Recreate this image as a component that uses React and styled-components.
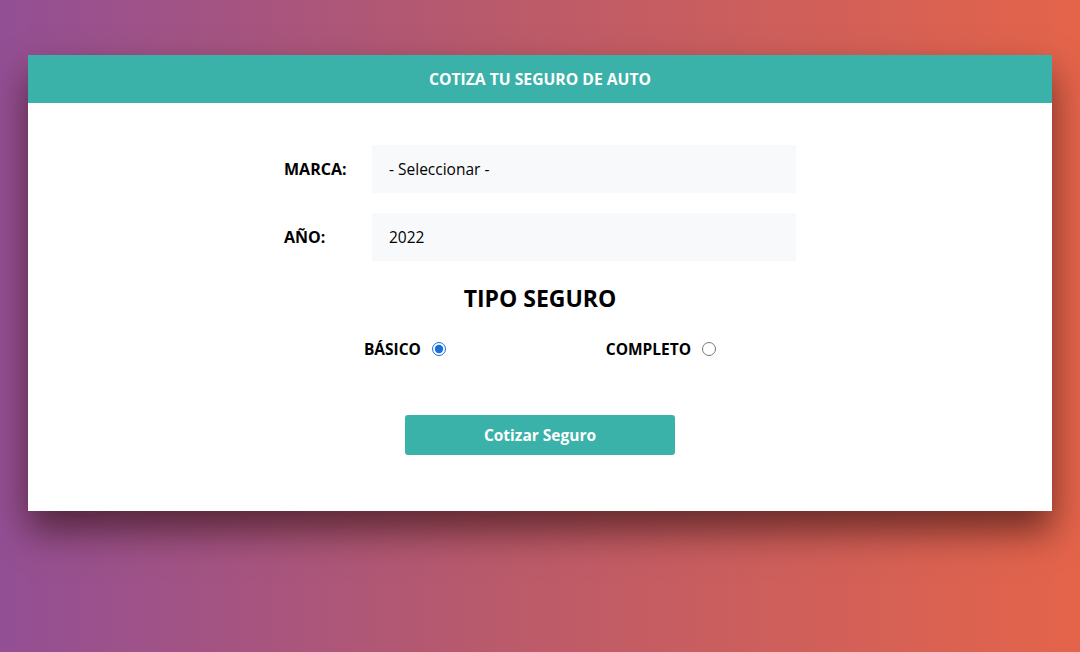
import styled, { createGlobalStyle } from "styled-components";

const GlobalStyle = createGlobalStyle`
  * { box-sizing: border-box; }
  html, body {
    margin: 0;
    height: 100%;
  }
  body {
    font-family: "Open Sans", "Noto Sans", sans-serif;
    background: linear-gradient(to right, #934f94 0%, #b95a6c 45%, #e4644a 100%);
    min-height: 652px;
  }
`;

export default function App() {
  return (
    <>
      <GlobalStyle />
      <Page>
        <Card>
          <Header>Cotiza tu seguro de auto</Header>
          <Form>
            <Field>
              <Label>Marca:</Label>
              <Select defaultValue="">
                <option value="">- Seleccionar -</option>
              </Select>
            </Field>
            <Field>
              <Label>Año:</Label>
              <Select defaultValue="2022">
                <option value="2022">2022</option>
              </Select>
            </Field>
            <Title>Tipo Seguro</Title>
            <Radios>
              <RadioGroup>
                <RadioLabel>Básico</RadioLabel>
                <Radio type="radio" name="plan" defaultChecked />
              </RadioGroup>
              <RadioGroup>
                <RadioLabel>Completo</RadioLabel>
                <Radio type="radio" name="plan" />
              </RadioGroup>
            </Radios>
            <Button type="button">Cotizar Seguro</Button>
          </Form>
        </Card>
      </Page>
    </>
  );
}

const Page = styled.div`
  padding: 55px 28px 0;
`;

const Card = styled.div`
  background: #fff;
  box-shadow: 0 20px 34px rgba(40, 10, 10, 0.6);
`;

const Header = styled.header`
  height: 48px;
  background: #3ab1a9;
  color: #fff;
  display: flex;
  align-items: center;
  justify-content: center;
  font-size: 15.7px;
  font-weight: 700;
  text-transform: uppercase;
`;

const Form = styled.form`
  width: 512px;
  margin: 0 auto;
  padding: 42px 0 56px;
  display: flex;
  flex-direction: column;
`;

const Field = styled.div`
  display: flex;
  align-items: center;
  margin-bottom: 20px;
`;

const Label = styled.label`
  flex: 0 0 88px;
  font-size: 16px;
  font-weight: 700;
  text-transform: uppercase;
  color: #000;
`;

const Select = styled.select`
  flex: 1;
  height: 48px;
  border: none;
  background: #f8f9fa;
  padding: 0 17px;
  font-family: inherit;
  font-size: 15.5px;
  color: #000;
  appearance: none;
  outline: none;
`;

const Title = styled.h2`
  margin: 3px 0 0;
  text-align: center;
  font-size: 23px;
  font-weight: 700;
  text-transform: uppercase;
  line-height: 1.3;
`;

const Radios = styled.div`
  display: flex;
  justify-content: space-around;
  margin-top: 24px;
`;

const RadioGroup = styled.div`
  display: flex;
  align-items: center;
  gap: 11px;
`;

const RadioLabel = styled.span`
  font-size: 15.5px;
  font-weight: 700;
  text-transform: uppercase;
`;

const Radio = styled.input`
  margin: 0;
  width: 14px;
  height: 14px;
  accent-color: #1a6ed8;
`;

const Button = styled.button`
  margin: 55px auto 0;
  width: 270px;
  height: 40px;
  border: none;
  border-radius: 3px;
  background: #3ab1a9;
  color: #fff;
  font-family: inherit;
  font-size: 15.5px;
  font-weight: 700;
  cursor: pointer;
`;
